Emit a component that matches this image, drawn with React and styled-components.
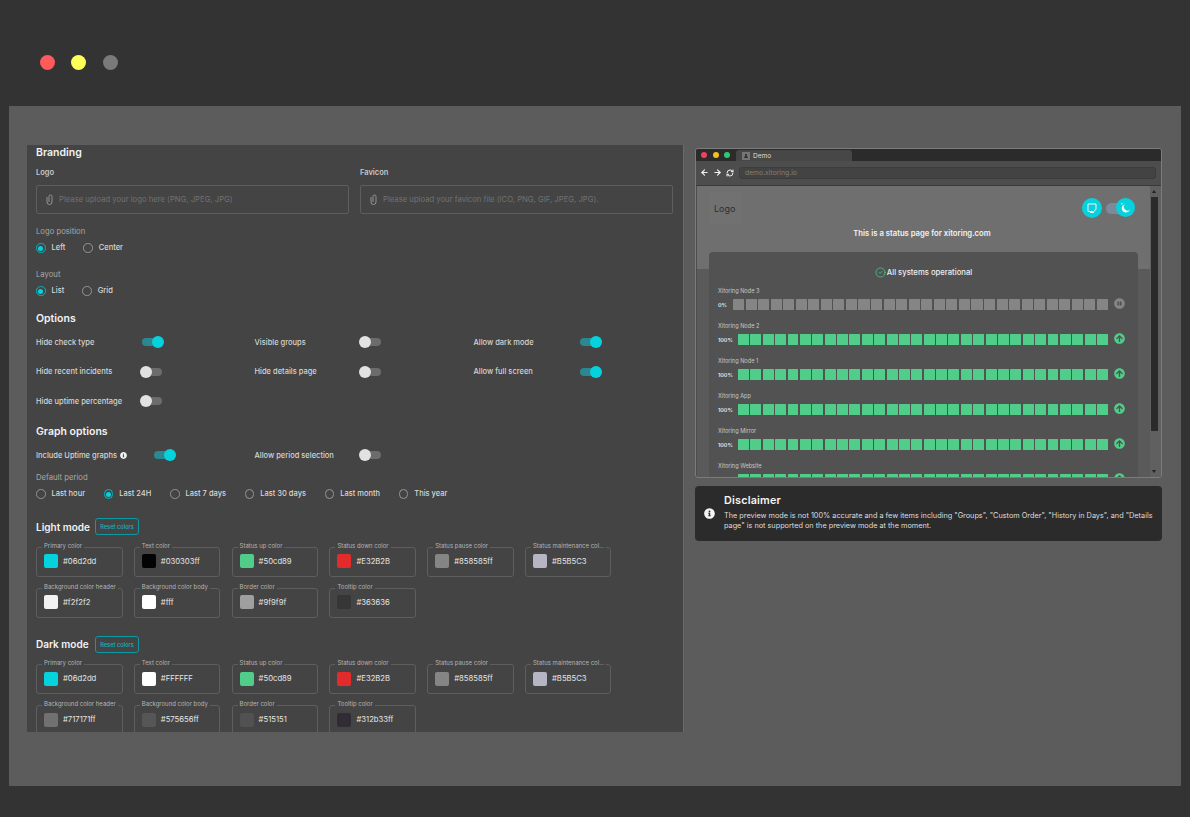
import React from 'react';
import styled, { createGlobalStyle } from 'styled-components';
import { ArrowLeft, ArrowRight, RefreshCw, CircleCheck } from 'lucide-react';
import { FaArrowCircleUp, FaPauseCircle, FaInfoCircle, FaUser } from 'react-icons/fa';

const GlobalStyle = createGlobalStyle`
  html, body {
    margin: 0;
    height: 817px;
    overflow: hidden;
    background: #333333;
    font-family: "Inter", "Noto Sans", sans-serif;
  }
  * { box-sizing: border-box; }
`;

const TopBar = styled.div`
  height: 106px;
  display: flex;
  align-items: center;
  gap: 16.5px;
  padding: 18px 0 0 39.5px;
`;

const Dot = styled.span`
  width: 15px;
  height: 15px;
  border-radius: 50%;
  background: ${(p) => p.$color};
`;

const Main = styled.div`
  margin-left: 9px;
  width: 1172px;
  height: 680px;
  background: #5c5c5c;
  padding: 39px 0 0 18px;
  display: flex;
  align-items: flex-start;
`;

const Settings = styled.div`
  width: 657px;
  height: 587px;
  background: #444444;
  border-right: 1px solid #6a6a6a;
  padding: 1px 0 0 9px;
  overflow: hidden;
  flex-shrink: 0;
`;

const Heading = styled.div`
  font-size: 10.5px;
  line-height: 14px;
  font-weight: 600;
  color: #f2f2f2;
  margin-top: ${(p) => p.$top || 0}px;
`;

const UploadRow = styled.div`
  display: flex;
  gap: 11px;
  margin-top: 8px;
`;

const Upload = styled.div`
  width: 313px;
`;

const UploadLabel = styled.div`
  font-size: 7.5px;
  line-height: 10px;
  font-weight: 600;
  color: #c9c9c9;
`;

const UploadBox = styled.div`
  height: 29px;
  margin-top: 7px;
  border: 1px solid #5e5e5e;
  border-radius: 2px;
  display: flex;
  align-items: center;
  gap: 6px;
  padding-left: 9px;
  font-size: 7.7px;
  color: #727272;
  white-space: nowrap;
`;

const FieldLabel = styled.div`
  font-size: 7.7px;
  line-height: 10px;
  color: #a8a8a8;
  margin-top: ${(p) => p.$top}px;
`;

const RadioRow = styled.div`
  display: flex;
  gap: ${(p) => p.$gap}px;
  margin-top: 6px;
`;

const RadioItem = styled.div`
  display: flex;
  align-items: center;
  gap: 6px;
  font-size: 7.5px;
  line-height: 10px;
  font-weight: 500;
  color: #d8d8d8;
`;

const RadioMark = styled.span`
  width: 9.5px;
  height: 9.5px;
  border-radius: 50%;
  border: 1px solid ${(p) => (p.$on ? '#08b5be' : '#969696')};
  display: flex;
  align-items: center;
  justify-content: center;
  &::after {
    content: '';
    width: 5px;
    height: 5px;
    border-radius: 50%;
    background: ${(p) => (p.$on ? '#06d2dd' : 'transparent')};
  }
`;

const ToggleGrid = styled.div`
  display: grid;
  grid-template-columns: 218.5px 219px 160px;
  row-gap: 15.5px;
  margin-top: 9px;
`;

const ToggleCell = styled.div`
  height: 14px;
  display: flex;
  align-items: center;
`;

const ToggleLabel = styled.div`
  width: ${(p) => p.$width || 104}px;
  display: flex;
  align-items: center;
  gap: 3px;
  font-size: 7.5px;
  font-weight: 500;
  color: #d4d4d4;
  white-space: nowrap;
`;

const Toggle = styled.span`
  position: relative;
  width: 24px;
  height: 12px;
  &::before {
    content: '';
    position: absolute;
    left: 2px;
    top: 2px;
    width: 20px;
    height: 8px;
    border-radius: 4px;
    background: ${(p) => (p.$on ? '#2b8790' : '#6c6c6c')};
  }
  &::after {
    content: '';
    position: absolute;
    left: ${(p) => (p.$on ? 12 : 0)}px;
    top: 0;
    width: 12px;
    height: 12px;
    border-radius: 50%;
    background: ${(p) => (p.$on ? '#06d2dd' : '#e2e2e2')};
  }
`;

const ModeHead = styled.div`
  display: flex;
  align-items: center;
  gap: 7px;
  margin-top: ${(p) => p.$top}px;
`;

const ModeTitle = styled.div`
  width: 52px;
  font-size: 10px;
  font-weight: 600;
  color: #f2f2f2;
  white-space: nowrap;
`;

const ResetButton = styled.div`
  width: 44px;
  height: 17px;
  border: 1px solid #0a9aa3;
  border-radius: 3px;
  display: flex;
  align-items: center;
  justify-content: center;
  font-size: 5.7px;
  font-weight: 500;
  color: #0fb6c0;
`;

const ColorGrid = styled.div`
  display: grid;
  grid-template-columns: repeat(6, 86.5px);
  column-gap: 11.3px;
  row-gap: 6px;
  margin-top: ${(p) => p.$top}px;
`;

const ColorField = styled.fieldset`
  margin: 0;
  padding: 0 0 5.5px 7px;
  height: 35px;
  border: 1px solid #5e5e5e;
  border-radius: 3px;
  display: flex;
  align-items: center;
  gap: 5px;
  min-width: 0;
`;

const ColorLegend = styled.legend`
  margin-left: -2px;
  padding: 0 2px 3px;
  font-size: 6px;
  line-height: 8px;
  color: #b4b4b4;
  white-space: nowrap;
`;

const Swatch = styled.span`
  width: 14px;
  height: 14px;
  border-radius: 2px;
  background: ${(p) => p.$color};
  flex-shrink: 0;
`;

const ColorValue = styled.span`
  font-size: 7.7px;
  color: #e6e6e6;
`;

const Side = styled.div`
  width: 467px;
  margin: 3px 0 0 11px;
`;

const BrowserFrame = styled.div`
  height: 330px;
  border: 1px solid #7c7c7c;
  border-radius: 3px;
  background: #4d4d4d;
  overflow: hidden;
  display: flex;
  flex-direction: column;
`;

const TabBar = styled.div`
  height: 12px;
  background: #2b2b2b;
  display: flex;
  align-items: flex-end;
  padding-left: 5px;
  flex-shrink: 0;
`;

const WinDot = styled.span`
  width: 6px;
  height: 6px;
  border-radius: 50%;
  margin: 0 5.5px 3px 0;
  background: ${(p) => p.$color};
  flex-shrink: 0;
`;

const Tab = styled.div`
  width: 116px;
  height: 11px;
  margin-left: 0.5px;
  background: #474747;
  border-radius: 3px 3px 0 0;
  display: flex;
  align-items: center;
  gap: 3px;
  padding-left: 6px;
  font-size: 6.5px;
  color: #dcdcdc;
`;

const TabIcon = styled.span`
  width: 8px;
  height: 8px;
  background: #757575;
  display: flex;
  align-items: center;
  justify-content: center;
  color: #2b2b2b;
`;

const AddressBar = styled.div`
  height: 25px;
  background: #4d4d4d;
  border-bottom: 1px solid #3a3a3a;
  display: flex;
  align-items: center;
  gap: 4px;
  padding: 0 5px 1px 4px;
  color: #f0f0f0;
  flex-shrink: 0;
`;

const UrlBox = styled.div`
  flex: 1;
  height: 12px;
  margin-left: 1px;
  background: #434343;
  border: 1px solid #3c3c3c;
  border-radius: 3px;
  display: flex;
  align-items: center;
  padding-left: 5px;
  font-size: 6.8px;
  color: #7e7e7e;
`;

const Viewport = styled.div`
  flex: 1;
  min-height: 0;
  display: flex;
  padding-left: 1px;
`;

const PageArea = styled.div`
  flex: 1;
  background: #5a5a5a;
  overflow: hidden;
`;

const PageHead = styled.div`
  height: 83px;
  background: #6f6f6f;
  padding: 6px 15px 0 12px;
`;

const HeadRow = styled.div`
  display: flex;
  align-items: center;
  justify-content: space-between;
`;

const LogoBox = styled.div`
  width: 33px;
  height: 32px;
  background: #717171;
  display: flex;
  align-items: center;
  padding-left: 5px;
  font-size: 9px;
  color: #2e2e2e;
`;

const HeadActions = styled.div`
  display: flex;
  align-items: center;
  gap: 4px;
`;

const RoundButton = styled.span`
  width: 20px;
  height: 20px;
  border-radius: 50%;
  background: #06d2dd;
  display: flex;
  align-items: center;
  justify-content: center;
  color: #f4f4f4;
`;

const ModeSwitch = styled.span`
  position: relative;
  width: 29px;
  height: 20px;
  &::before {
    content: '';
    position: absolute;
    left: 0;
    top: 4.5px;
    width: 24px;
    height: 11px;
    border-radius: 6px;
    background: #7c8a9c;
  }
`;

const MoonKnob = styled(RoundButton)`
  position: absolute;
  right: 0;
  top: 0;
  width: 19px;
  height: 19px;
`;

const Subtitle = styled.div`
  margin-top: 4px;
  text-align: center;
  font-size: 7.7px;
  line-height: 12px;
  font-weight: 600;
  color: #f4f4f4;
`;

const StatusCard = styled.div`
  margin: -17px 12px 0;
  height: 240px;
  background: #525252;
  border-radius: 4px 4px 0 0;
  padding: 14px 9px 0;
`;

const AllGood = styled.div`
  display: flex;
  align-items: center;
  justify-content: center;
  gap: 1px;
  height: 12px;
  font-size: 7.7px;
  font-weight: 500;
  color: #eeeeee;
`;

const MonitorList = styled.div`
  margin-top: 9px;
`;

const Monitor = styled.div`
  height: 35px;
`;

const MonitorName = styled.div`
  font-size: 5.6px;
  line-height: 9px;
  color: #c8c8c8;
`;

const BarRow = styled.div`
  display: flex;
  align-items: center;
  margin-top: 2.5px;
  height: 12px;
`;

const Percent = styled.span`
  width: ${(p) => p.$width}px;
  font-size: 5.4px;
  font-weight: 600;
  color: #e6e6e6;
  flex-shrink: 0;
`;

const Bars = styled.div`
  flex: 1;
  display: grid;
  grid-template-columns: repeat(30, 1fr);
  column-gap: 1.45px;
`;

const Bar = styled.span`
  height: 11px;
  background: ${(p) => p.$color};
  border-radius: 0.5px;
`;

const StatusIcon = styled.span`
  width: 11px;
  margin: -2px 4.5px 0 5.5px;
  display: flex;
  color: ${(p) => p.$color};
  font-size: 11px;
`;

const ScrollBar = styled.div`
  width: 11px;
  padding-right: 3px;
  background: #606060;
  display: flex;
  flex-direction: column;
  align-items: center;
  flex-shrink: 0;
`;

const ScrollArrow = styled.span`
  width: 0;
  height: 0;
  margin: ${(p) => (p.$down ? 'auto 0 4px' : '4px 0 0')};
  border-left: 2px solid transparent;
  border-right: 2px solid transparent;
  ${(p) => (p.$down ? 'border-top: 3px solid #222;' : 'border-bottom: 3px solid #222;')}
`;

const ScrollThumb = styled.span`
  width: 7px;
  height: 234px;
  margin-top: 4px;
  background: #2b2b2b;
`;

const Disclaimer = styled.div`
  margin-top: 8px;
  height: 55px;
  background: #2b2b2b;
  border-radius: 4px;
  display: flex;
  align-items: center;
  gap: 9px;
  padding: 0 8px 0 9px;
  color: #f4f4f4;
`;

const DisclaimerBody = styled.div`
  flex: 1;
`;

const DisclaimerTitle = styled.div`
  font-size: 10.8px;
  line-height: 14px;
  letter-spacing: 0.2px;
  font-weight: 600;
  color: #f4f4f4;
  margin-top: -2px;
`;

const DisclaimerText = styled.div`
  margin-top: 3px;
  font-size: 7.3px;
  line-height: 10.5px;
  color: #dedede;
`;

const ClipIcon = () => (
  <svg width="7" height="11" viewBox="0 0 7 11" fill="none" stroke="#a6a6a6" strokeWidth="0.8">
    <path d="M1 3v5a2.500 2.500 0 0 0 5 0V2.500a1.500 1.500 0 0 0-3 0V8" />
  </svg>
);

const ScreenIcon = () => (
  <svg width="12" height="12" viewBox="0 0 12 12" fill="none" stroke="currentColor" strokeWidth="1">
    <path d="M2 2h8v5.500L7.500 9.500H2z" />
    <path d="M4 10.500h4" />
  </svg>
);

const MoonIcon = () => (
  <svg width="13" height="13" viewBox="0 0 13 13" fill="currentColor">
    <path d="M6 3.200A4.200 4.200 0 1 0 11 8.500 3.600 3.600 0 0 1 6 3.200z" />
    <circle cx="2.800" cy="2.800" r="0.800" />
  </svg>
);

const lightColors = [
  ['Primary color', '#06d2dd', '#06d2dd'],
  ['Text color', '#030303', '#030303ff'],
  ['Status up color', '#50cd89', '#50cd89'],
  ['Status down color', '#E32B2B', '#E32B2B'],
  ['Status pause color', '#858585', '#858585ff'],
  ['Status maintenance col...', '#B5B5C3', '#B5B5C3'],
  ['Background color header', '#f2f2f2', '#f2f2f2'],
  ['Background color body', '#ffffff', '#fff'],
  ['Border color', '#9f9f9f', '#9f9f9f'],
  ['Tooltip color', '#363636', '#363636'],
];

const darkColors = [
  ['Primary color', '#06d2dd', '#06d2dd'],
  ['Text color', '#ffffff', '#FFFFFF'],
  ['Status up color', '#50cd89', '#50cd89'],
  ['Status down color', '#E32B2B', '#E32B2B'],
  ['Status pause color', '#858585', '#858585ff'],
  ['Status maintenance col...', '#B5B5C3', '#B5B5C3'],
  ['Background color header', '#717171', '#717171ff'],
  ['Background color body', '#575656', '#575656ff'],
  ['Border color', '#515151', '#515151'],
  ['Tooltip color', '#312b33', '#312b33ff'],
];

const periods = [
  ['Last hour', false],
  ['Last 24H', true],
  ['Last 7 days', false],
  ['Last 30 days', false],
  ['Last month', false],
  ['This year', false],
];

const monitors = [
  { name: 'Xitoring Node 3', percent: '0%', paused: true },
  { name: 'Xitoring Node 2', percent: '100%' },
  { name: 'Xitoring Node 1', percent: '100%' },
  { name: 'Xitoring App', percent: '100%' },
  { name: 'Xitoring Mirror', percent: '100%' },
  { name: 'Xitoring Website', percent: '100%' },
];

function Colors({ items, top }) {
  return (
    <ColorGrid $top={top}>
      {items.map(([label, color, value]) => (
        <ColorField key={label}>
          <ColorLegend>{label}</ColorLegend>
          <Swatch $color={color} />
          <ColorValue>{value}</ColorValue>
        </ColorField>
      ))}
    </ColorGrid>
  );
}

function Radio({ on, children }) {
  return (
    <RadioItem>
      <RadioMark $on={on} />
      {children}
    </RadioItem>
  );
}

function Setting({ label, on, width, info }) {
  return (
    <ToggleCell>
      <ToggleLabel $width={width}>
        {label}
        {info && <FaInfoCircle size={7} color="#f2f2f2" />}
      </ToggleLabel>
      <Toggle $on={on} />
    </ToggleCell>
  );
}

export default function App() {
  return (
    <>
      <GlobalStyle />
      <TopBar>
        <Dot $color="#ff5a5a" />
        <Dot $color="#ffff57" />
        <Dot $color="#7a7a7a" />
      </TopBar>
      <Main>
        <Settings>
          <Heading>Branding</Heading>
          <UploadRow>
            <Upload>
              <UploadLabel>Logo</UploadLabel>
              <UploadBox>
                <ClipIcon />
                Please upload your logo here (PNG, JPEG, JPG)
              </UploadBox>
            </Upload>
            <Upload>
              <UploadLabel>Favicon</UploadLabel>
              <UploadBox>
                <ClipIcon />
                Please upload your favicon file (ICO, PNG, GIF, JPEG, JPG).
              </UploadBox>
            </Upload>
          </UploadRow>

          <FieldLabel $top={13}>Logo position</FieldLabel>
          <RadioRow $gap={18}>
            <Radio on>Left</Radio>
            <Radio>Center</Radio>
          </RadioRow>
          <FieldLabel $top={17}>Layout</FieldLabel>
          <RadioRow $gap={18}>
            <Radio on>List</Radio>
            <Radio>Grid</Radio>
          </RadioRow>

          <Heading $top={16}>Options</Heading>
          <ToggleGrid>
            <Setting label="Hide check type" on />
            <Setting label="Visible groups" />
            <Setting label="Allow dark mode" on />
            <Setting label="Hide recent incidents" />
            <Setting label="Hide details page" />
            <Setting label="Allow full screen" on />
            <Setting label="Hide uptime percentage" />
          </ToggleGrid>

          <Heading $top={17}>Graph options</Heading>
          <ToggleGrid>
            <Setting label="Include Uptime graphs" on info width={116} />
            <Setting label="Allow period selection" />
          </ToggleGrid>

          <FieldLabel $top={11}>Default period</FieldLabel>
          <RadioRow $gap={18.7}>
            {periods.map(([label, on]) => (
              <Radio key={label} on={on}>{label}</Radio>
            ))}
          </RadioRow>

          <ModeHead $top={19}>
            <ModeTitle>Light mode</ModeTitle>
            <ResetButton>Reset colors</ResetButton>
          </ModeHead>
          <Colors items={lightColors} top={6.5} />

          <ModeHead $top={18}>
            <ModeTitle>Dark mode</ModeTitle>
            <ResetButton>Reset colors</ResetButton>
          </ModeHead>
          <Colors items={darkColors} top={6.5} />
        </Settings>

        <Side>
          <BrowserFrame>
            <TabBar>
              <WinDot $color="#f0405f" />
              <WinDot $color="#f5bd1f" />
              <WinDot $color="#2fc76f" />
              <Tab>
                <TabIcon><FaUser size={4} /></TabIcon>
                Demo
              </Tab>
            </TabBar>
            <AddressBar>
              <ArrowLeft size={9} strokeWidth={3} />
              <ArrowRight size={9} strokeWidth={3} />
              <RefreshCw size={8} strokeWidth={3} />
              <UrlBox>demo.xitoring.io</UrlBox>
            </AddressBar>
            <Viewport>
              <PageArea>
                <PageHead>
                  <HeadRow>
                    <LogoBox>Logo</LogoBox>
                    <HeadActions>
                      <RoundButton><ScreenIcon /></RoundButton>
                      <ModeSwitch>
                        <MoonKnob><MoonIcon /></MoonKnob>
                      </ModeSwitch>
                    </HeadActions>
                  </HeadRow>
                  <Subtitle>This is a status page for xitoring.com</Subtitle>
                </PageHead>
                <StatusCard>
                  <AllGood>
                    <CircleCheck size={11} color="#50cd89" strokeWidth={1.6} />
                    All systems operational
                  </AllGood>
                  <MonitorList>
                    {monitors.map((m) => (
                      <Monitor key={m.name}>
                        <MonitorName>{m.name}</MonitorName>
                        <BarRow>
                          <Percent $width={m.paused ? 15 : 20}>{m.percent}</Percent>
                          <Bars>
                            {Array.from({ length: 30 }, (_, i) => (
                              <Bar key={i} $color={m.paused ? '#858585' : '#50cd89'} />
                            ))}
                          </Bars>
                          <StatusIcon $color={m.paused ? '#858585' : '#50cd89'}>
                            {m.paused ? <FaPauseCircle /> : <FaArrowCircleUp />}
                          </StatusIcon>
                        </BarRow>
                      </Monitor>
                    ))}
                  </MonitorList>
                </StatusCard>
              </PageArea>
              <ScrollBar>
                <ScrollArrow />
                <ScrollThumb />
                <ScrollArrow $down />
              </ScrollBar>
            </Viewport>
          </BrowserFrame>
          <Disclaimer>
            <FaInfoCircle size={11} />
            <DisclaimerBody>
              <DisclaimerTitle>Disclaimer</DisclaimerTitle>
              <DisclaimerText>
                The preview mode is not 100% accurate and a few items including "Groups", "Custom Order", "History in Days", and "Details page" is not supported on the preview mode at the moment.
              </DisclaimerText>
            </DisclaimerBody>
          </Disclaimer>
        </Side>
      </Main>
    </>
  );
}
